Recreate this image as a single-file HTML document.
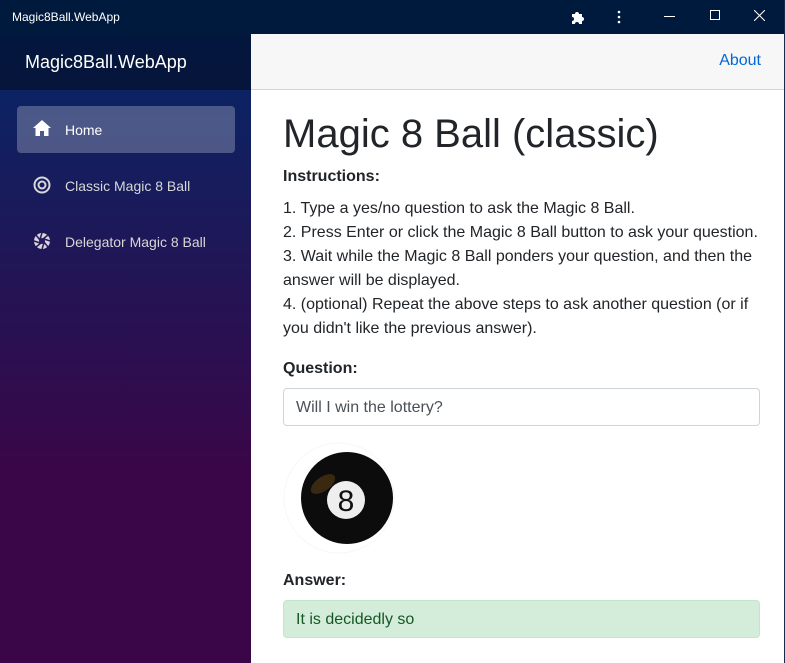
<!DOCTYPE html>
<html><head><style>
*{box-sizing:border-box;margin:0;padding:0}
body{width:785px;height:663px;overflow:hidden;font-family:"Liberation Sans",Arial,sans-serif;background:#fff;position:relative}
.tb{position:absolute;left:0;top:0;width:785px;height:34px;background:#001a3e;color:#fff;font-size:12px}
.tb .t{position:absolute;left:12px;top:10px}
.side{position:absolute;left:0;top:34px;width:251px;height:629px;background:linear-gradient(180deg,rgb(5,39,103) 0%,#3a0647 70%)}
.brand{height:56px;background:rgba(0,0,0,.4);color:#fff;font-size:18px;padding:18px 0 0 25px}
.nav{position:absolute;left:17px;width:218px;height:47px;border-radius:4px;color:#d7d7d7;font-size:14px}
.nav span{position:absolute;left:48px;top:16px}
.nav svg{position:absolute;left:16px;top:14px}
.top{position:absolute;left:251px;top:34px;width:533px;height:56px;background:#f7f7f7;border-bottom:1px solid #d6d5d5}
.top a{position:absolute;right:23px;top:18px;color:#0366d6;font-size:16px}
.main{position:absolute;left:283px;top:92px;width:480px;color:#212529;font-size:16px;line-height:24px}
h1{font-size:40px;font-weight:400;line-height:48px;margin-top:18px}
.box{width:477px;height:38px;border:1px solid #ced4da;border-radius:4px;padding:7px 12px;color:#495057}
</style></head><body>
<div style="position:absolute;right:0;top:0;width:1px;height:663px;background:#1a2a4a;z-index:5"></div>
<div class="tb"><span class="t">Magic8Ball.WebApp</span>
<svg style="position:absolute;left:571px;top:10px" width="14" height="14" viewBox="0 0 14 14"><path d="M1 4h3a2 2 0 1 1 4 0h3v3a2 2 0 1 1 0 4v3H8a2 2 0 1 0-4 0H1v-3a2 2 0 1 0 0-4z" fill="#fff"/></svg>
<svg style="position:absolute;left:616px;top:10px" width="6" height="14"><circle cx="3" cy="2" r="1.3" fill="#fff"/><circle cx="3" cy="7" r="1.3" fill="#fff"/><circle cx="3" cy="12" r="1.3" fill="#fff"/></svg>
<div style="position:absolute;left:664px;top:16px;width:11px;height:1px;background:#fff"></div>
<div style="position:absolute;left:710px;top:10px;width:10px;height:10px;border:1px solid #fff"></div>
<svg style="position:absolute;left:754px;top:10px" width="11" height="11"><path d="M0 0L11 11M11 0L0 11" stroke="#fff"/></svg>
</div>
<div class="side"><div class="brand">Magic8Ball.WebApp</div></div>
<div class="nav" style="top:106px;background:rgba(255,255,255,.25);color:#fff"><svg width="18" height="16" viewBox="0 0 18 16"><path d="M9 0L0 8h2.5v8h4.5v-5h4v5h4.5V8H18z" fill="#fff"/></svg><span>Home</span></div>
<div class="nav" style="top:162px"><svg width="18" height="18" viewBox="0 0 18 18"><circle cx="9" cy="9" r="7.5" fill="none" stroke="#d7d7d7" stroke-width="2"/><circle cx="9" cy="9" r="3.5" fill="none" stroke="#d7d7d7" stroke-width="2"/></svg><span>Classic Magic 8 Ball</span></div>
<div class="nav" style="top:218px"><svg width="18" height="18" viewBox="0 0 18 18"><circle cx="9" cy="9" r="8" fill="#d7d7d7"/><circle cx="9" cy="9" r="3" fill="#2a1a60"/><path d="M9 1L7 7M17 9L11 7M9 17L11 11M1 9L7 11M3 3L7 8M15 3L10 7M15 15L11 10M3 15L8 11" stroke="#2a1a60" stroke-width="1.5"/></svg><span>Delegator Magic 8 Ball</span></div>
<div class="top"><a>About</a></div>
<div class="main">
<h1>Magic 8 Ball (classic)</h1>
<div style="font-weight:bold;margin-top:7px">Instructions:</div>
<div style="margin-top:8px">1. Type a yes/no question to ask the Magic 8 Ball.<br>2. Press Enter or click the Magic 8 Ball button to ask your question.<br>3. Wait while the Magic 8 Ball ponders your question, and then the answer will be displayed.<br>4. (optional) Repeat the above steps to ask another question (or if you didn't like the previous answer).</div>
<div style="font-weight:bold;margin-top:16px">Question:</div>
<div class="box" style="margin-top:7px">Will I win the lottery?</div>
<svg style="margin-top:16px;display:block" width="112" height="112" viewBox="0 0 112 112"><circle cx="56" cy="56" r="55" fill="#fff" stroke="#f7f7f7"/><circle cx="64" cy="56" r="46" fill="#0c0c0c"/><ellipse cx="40" cy="42" rx="14" ry="7" fill="#5a3d15" opacity=".6" transform="rotate(-35 40 42)"/><circle cx="63" cy="58" r="19" fill="#eee"/><text x="63" y="69" text-anchor="middle" font-size="30" fill="#111" font-family="Liberation Sans">8</text></svg>
<div style="font-weight:bold;margin-top:15px">Answer:</div>
<div class="box" style="margin-top:7px;background:#d4edda;border-color:#c3e6cb;color:#155724">It is decidedly so</div>
</div>
</body></html>
